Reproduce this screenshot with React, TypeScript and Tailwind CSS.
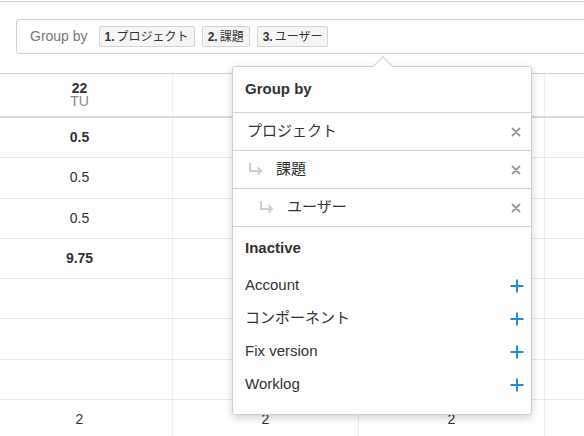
import React from "react";

const font = "font-['Liberation_Sans','Arial','Noto_Sans_CJK_JP',sans-serif]";

type Row = { value?: string; bold?: boolean; cells?: string[] };

const rows: Row[] = [
  { value: "0.5", bold: true },
  { value: "0.5" },
  { value: "0.5" },
  { value: "9.75", bold: true },
  {},
  {},
  {},
  { cells: ["2", "2", "2", ""] },
];

function CloseIcon() {
  return (
    <svg width="10" height="10" viewBox="0 0 10 10" className="text-[#999]">
      <path d="M1.5 1.5 L8.5 8.5 M8.5 1.5 L1.5 8.5" stroke="currentColor" strokeWidth="1.8" strokeLinecap="round" />
    </svg>
  );
}

function PlusIcon() {
  return (
    <svg width="14" height="14" viewBox="0 0 14 14" className="text-[#1b8de6]">
      <path d="M7 0.5 V13.5 M0.5 7 H13.5" stroke="currentColor" strokeWidth="2" />
    </svg>
  );
}

function NestArrow() {
  return (
    <svg width="15" height="13" viewBox="0 0 15 13" className="text-[#cfcfcf]">
      <path d="M2 0 V8 H13 M9.5 4.5 L13 8 L9.5 11.5" stroke="currentColor" strokeWidth="2" fill="none" />
    </svg>
  );
}

function Chip({ n, label }: { n: string; label: string }) {
  return (
    <span className="flex h-[21px] items-center rounded-[2px] border border-[#d4d4d4] bg-[#f5f5f5] px-[5px] text-[12px] text-[#333]">
      <b className="mr-[2px]">{n}</b>
      {label}
    </span>
  );
}

const activeGroups = [
  { label: "プロジェクト", indent: 0 },
  { label: "課題", indent: 1 },
  { label: "ユーザー", indent: 2 },
];

const inactive = ["Account", "コンポーネント", "Fix version", "Worklog"];

export default function App() {
  return (
    <div className={`relative h-[436px] w-[584px] overflow-hidden bg-white text-[14px] text-[#333] ${font}`}>
      <div className="mt-px border-t border-[#d0d0d0]" />

      <div className="pt-[17px] pl-4">
        <div className="-mr-4 flex h-[35px] items-center gap-[7px] rounded-[3px] border border-[#d0d0d0] pl-[13px]">
          <span className="mr-[4px] text-[#777]">Group by</span>
          <Chip n="1." label="プロジェクト" />
          <Chip n="2." label="課題" />
          <Chip n="3." label="ユーザー" />
        </div>
      </div>

      <div className="mt-[19px] border-t border-[#d0d0d0]">
        <div className="-ml-[13px] grid grid-cols-[186px_186px_186px_186px] border-b-2 border-[#dadada]">
          <div className="flex h-[42px] flex-col items-center justify-center border-r border-[#eee]">
            <b className="leading-[13px]">22</b>
            <span className="leading-[13px] text-[#888]">TU</span>
          </div>
          <div className="border-r border-[#eee]" />
          <div className="border-r border-[#eee]" />
          <div />
        </div>
        {rows.map((row, i) => {
          const cells = row.cells ?? [row.value ?? "", "", "", ""];
          return (
            <div key={i} className="-ml-[13px] grid h-[40.3px] grid-cols-[186px_186px_186px_186px] border-b border-[#e8e8e8]">
              {cells.map((c, j) => (
                <div
                  key={j}
                  className={`flex items-center justify-center ${j < 3 ? "border-r border-[#eee]" : ""} ${
                    row.bold ? "font-bold" : ""
                  }`}
                >
                  {c}
                </div>
              ))}
            </div>
          );
        })}
      </div>

      <div className="absolute left-[232px] top-[66px] w-[300px] rounded-[3px] border border-[#d0d0d0] bg-white text-[15px] shadow-[0_3px_8px_rgba(0,0,0,0.18)]">
        <div className="absolute -top-[8px] left-[143px] h-[14px] w-[14px] rotate-45 border-l border-t border-[#d0d0d0] bg-white" />
        <div className="relative flex h-[45px] items-center pl-[12px] font-bold">Group by</div>
        {activeGroups.map((g) => (
          <div key={g.label} className="flex h-[38px] items-center border-t border-[#d0d0d0] pr-[10px]">
            <div className={`flex flex-1 items-center ${g.indent === 0 ? "pl-[14px]" : g.indent === 1 ? "pl-[15px]" : "pl-[26px]"}`}>
              {g.indent > 0 && (
                <span className="mr-[13px] flex">
                  <NestArrow />
                </span>
              )}
              <span>{g.label}</span>
            </div>
            <CloseIcon />
          </div>
        ))}
        <div className="border-t border-[#d0d0d0] pb-[13px]">
          <div className="flex h-[42px] items-center pl-[12px] font-bold">Inactive</div>
          {inactive.map((item) => (
            <div key={item} className="flex h-[33px] items-center justify-between pl-[12px] pr-[7px]">
              <span>{item}</span>
              <PlusIcon />
            </div>
          ))}
        </div>
      </div>
    </div>
  );
}
